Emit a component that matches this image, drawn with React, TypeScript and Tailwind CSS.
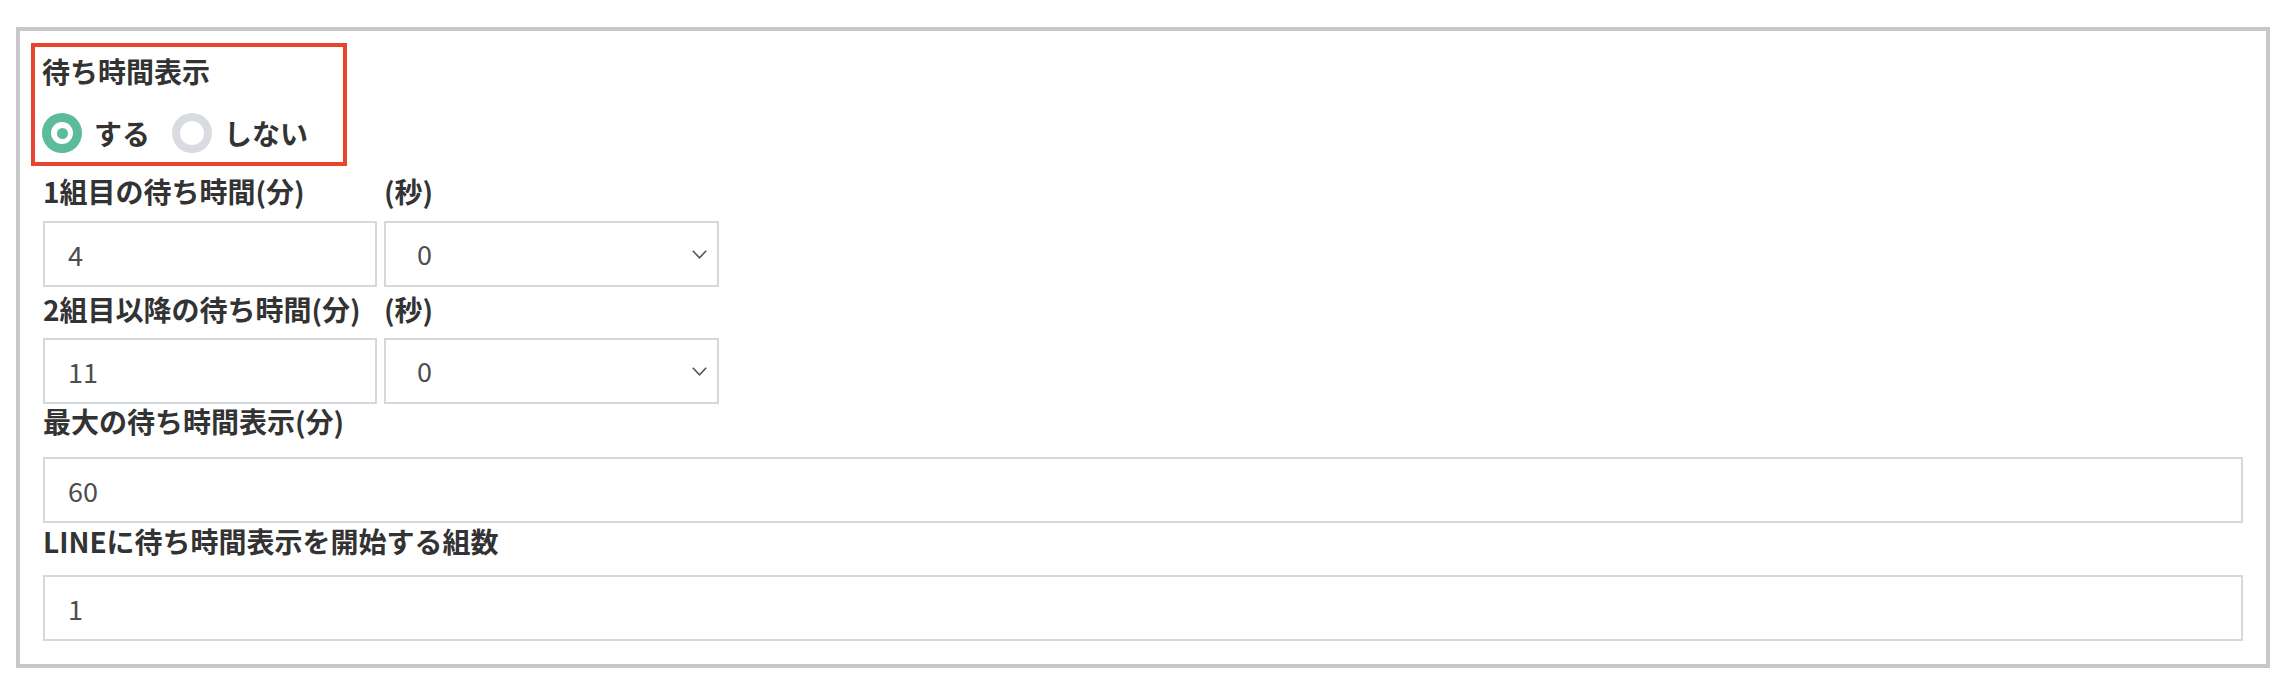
import React from "react";

function Chevron() {
  return (
    <svg width="15" height="9" viewBox="0 0 15 9" fill="none">
      <path d="M0.8 0.8 L7.5 7.8 L14.2 0.8" stroke="#555" strokeWidth="1.6" />
    </svg>
  );
}

function TextBox({ value }: { value: string }) {
  return (
    <input
      readOnly
      defaultValue={value}
      className="block w-full h-[66px] border-2 border-[#d5d8dc] bg-white px-[23px] text-[27px] text-[#4d4d4d] outline-none font-['Noto_Sans_CJK_JP',sans-serif]"
    />
  );
}

function SelectBox({ value }: { value: string }) {
  return (
    <div className="flex h-[66px] w-full items-center justify-between border-2 border-[#d5d8dc] bg-white pl-[31px] pr-[10px] text-[27px] text-[#4d4d4d]">
      <span>{value}</span>
      <Chevron />
    </div>
  );
}

export default function App() {
  return (
    <div className="min-h-screen bg-white font-['Noto_Sans_CJK_JP',sans-serif] text-[#333]">
      <div className="pl-[16px] pt-[27px]">
        <div className="w-[2254px] border-4 border-[#c8c8c8] px-[23px] pt-[12px] pb-[23px]">
          {/* 待ち時間表示 */}
          <div className="-ml-[12px] w-[316px] border-4 border-[#e8432d] pl-[7px] pt-[8px] pb-[9px]">
            <div className="text-[28px] font-bold leading-[32px]">待ち時間表示</div>
            <div className="mt-[26px] flex h-[40px] items-center">
              <div className="flex items-center">
                <div className="flex h-[40px] w-[40px] items-center justify-center rounded-full bg-[#5bbb9b]">
                  <div className="flex h-[22px] w-[22px] items-center justify-center rounded-full bg-white">
                    <div className="h-[11px] w-[11px] rounded-full bg-[#5bbb9b]" />
                  </div>
                </div>
                <span className="ml-[12px] text-[28px] font-bold leading-[32px]">する</span>
              </div>
              <div className="ml-[22px] flex items-center">
                <div className="flex h-[40px] w-[40px] items-center justify-center rounded-full bg-[#d8dbdf]">
                  <div className="h-[24px] w-[24px] rounded-full bg-white" />
                </div>
                <span className="ml-[12px] text-[28px] font-bold leading-[32px]">しない</span>
              </div>
            </div>
          </div>

          {/* 1組目 */}
          <div className="mt-[9px] flex gap-[7px] text-[28px] font-bold leading-[32px]">
            <div className="w-[334px]">1組目の待ち時間(分)</div>
            <div className="w-[335px]">(秒)</div>
          </div>
          <div className="mt-[14px] flex gap-[7px]">
            <div className="w-[334px]">
              <TextBox value="4" />
            </div>
            <div className="w-[335px]">
              <SelectBox value="0" />
            </div>
          </div>

          {/* 2組目以降 */}
          <div className="mt-[6px] flex gap-[7px] text-[28px] font-bold leading-[32px]">
            <div className="w-[334px]">2組目以降の待ち時間(分)</div>
            <div className="w-[335px]">(秒)</div>
          </div>
          <div className="mt-[13px] flex gap-[7px]">
            <div className="w-[334px]">
              <TextBox value="11" />
            </div>
            <div className="w-[335px]">
              <SelectBox value="0" />
            </div>
          </div>

          {/* 最大 */}
          <div className="mt-[1px] text-[28px] font-bold leading-[32px]">最大の待ち時間表示(分)</div>
          <div className="mt-[20px]">
            <TextBox value="60" />
          </div>

          {/* LINE */}
          <div className="mt-[2px] text-[28px] font-bold leading-[32px]">LINEに待ち時間表示を開始する組数</div>
          <div className="mt-[18px]">
            <TextBox value="1" />
          </div>
        </div>
      </div>
    </div>
  );
}
